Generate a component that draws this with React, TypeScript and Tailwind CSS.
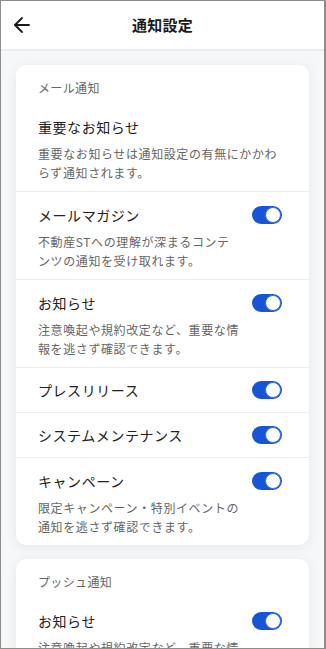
import React from "react";

const FONT = { fontFamily: '"Noto Sans CJK JP", "Noto Sans", sans-serif' };

function Toggle() {
  return (
    <div className="relative w-[30px] h-[18px] rounded-full bg-[#1656d6] shrink-0">
      <div className="absolute right-[1px] top-[1px] w-[16px] h-[16px] rounded-full bg-white border border-[#3b6fe0]" />
    </div>
  );
}

type Item = { title: string; desc?: string; toggle: boolean };

function Row({ item, first }: { item: Item; first: boolean }) {
  const hasDesc = !!item.desc;
  return (
    <div
      className={
        (first ? "" : "border-t border-[#ececec] ") +
        (hasDesc ? "pt-[12px] pb-[9px]" : "pt-[11px] pb-[11px]") +
        " pl-[22px] pr-[27px] flex gap-[12px]"
      }
    >
      <div className="flex-1 min-w-0">
        <div className="text-[14px] leading-[22px] tracking-[0.04em] text-[#222222]">{item.title}</div>
        {hasDesc && (
          <div className="mt-[6px] text-[12px] leading-[19px] tracking-[0.05em] text-[#666666]">{item.desc}</div>
        )}
      </div>
      {item.toggle && (
        <div className="h-[22px] flex items-center">
          <Toggle />
        </div>
      )}
    </div>
  );
}

function Card({ label, items }: { label: string; items: Item[] }) {
  return (
    <div className="bg-white rounded-[10px] shadow-[0_2px_12px_rgba(20,30,60,0.07)] shrink-0">
      <div className="pt-[15px] pb-[8px] pl-[22px] text-[12px] leading-[16px] tracking-[0.03em] text-[#666666]">
        {label}
      </div>
      {items.map((it, i) => (
        <Row key={i} item={it} first={i === 0} />
      ))}
    </div>
  );
}

export default function App() {
  const mail: Item[] = [
    { title: "重要なお知らせ", desc: "重要なお知らせは通知設定の有無にかかわらず通知されます。", toggle: false },
    { title: "メールマガジン", desc: "不動産STへの理解が深まるコンテンツの通知を受け取れます。", toggle: true },
    { title: "お知らせ", desc: "注意喚起や規約改定など、重要な情報を逃さず確認できます。", toggle: true },
    { title: "プレスリリース", toggle: true },
    { title: "システムメンテナンス", toggle: true },
    { title: "キャンペーン", desc: "限定キャンペーン・特別イベントの通知を逃さず確認できます。", toggle: true },
  ];
  const push: Item[] = [
    { title: "お知らせ", desc: "注意喚起や規約改定など、重要な情報を逃さず確認できます。", toggle: true },
  ];
  return (
    <div style={FONT} className="w-[326px] h-[649px] border border-r-2 border-[#8c8c8c] bg-[#f6f7f9] overflow-hidden flex flex-col">
      <div className="h-[50px] shrink-0 bg-white border-b-2 border-[#ececec] grid grid-cols-[48px_1fr_48px] items-center">
        <div className="pl-[9px] flex items-center text-[#1a1a1a]">
          <svg width="24" height="24" viewBox="0 0 24 24" fill="none" stroke="currentColor" strokeWidth="1.8" strokeLinecap="round" strokeLinejoin="round">
            <path d="m12 19-7-7 7-7" />
            <path d="M19 12H5" />
          </svg>
        </div>
        <div className="text-center text-[15px] font-bold tracking-[0.02em] text-[#1a1a1a]">通知設定</div>
        <div />
      </div>
      <div className="px-[15px] pt-[14px] flex flex-col gap-[14px]">
        <Card label="メール通知" items={mail} />
        <Card label="プッシュ通知" items={push} />
      </div>
    </div>
  );
}
